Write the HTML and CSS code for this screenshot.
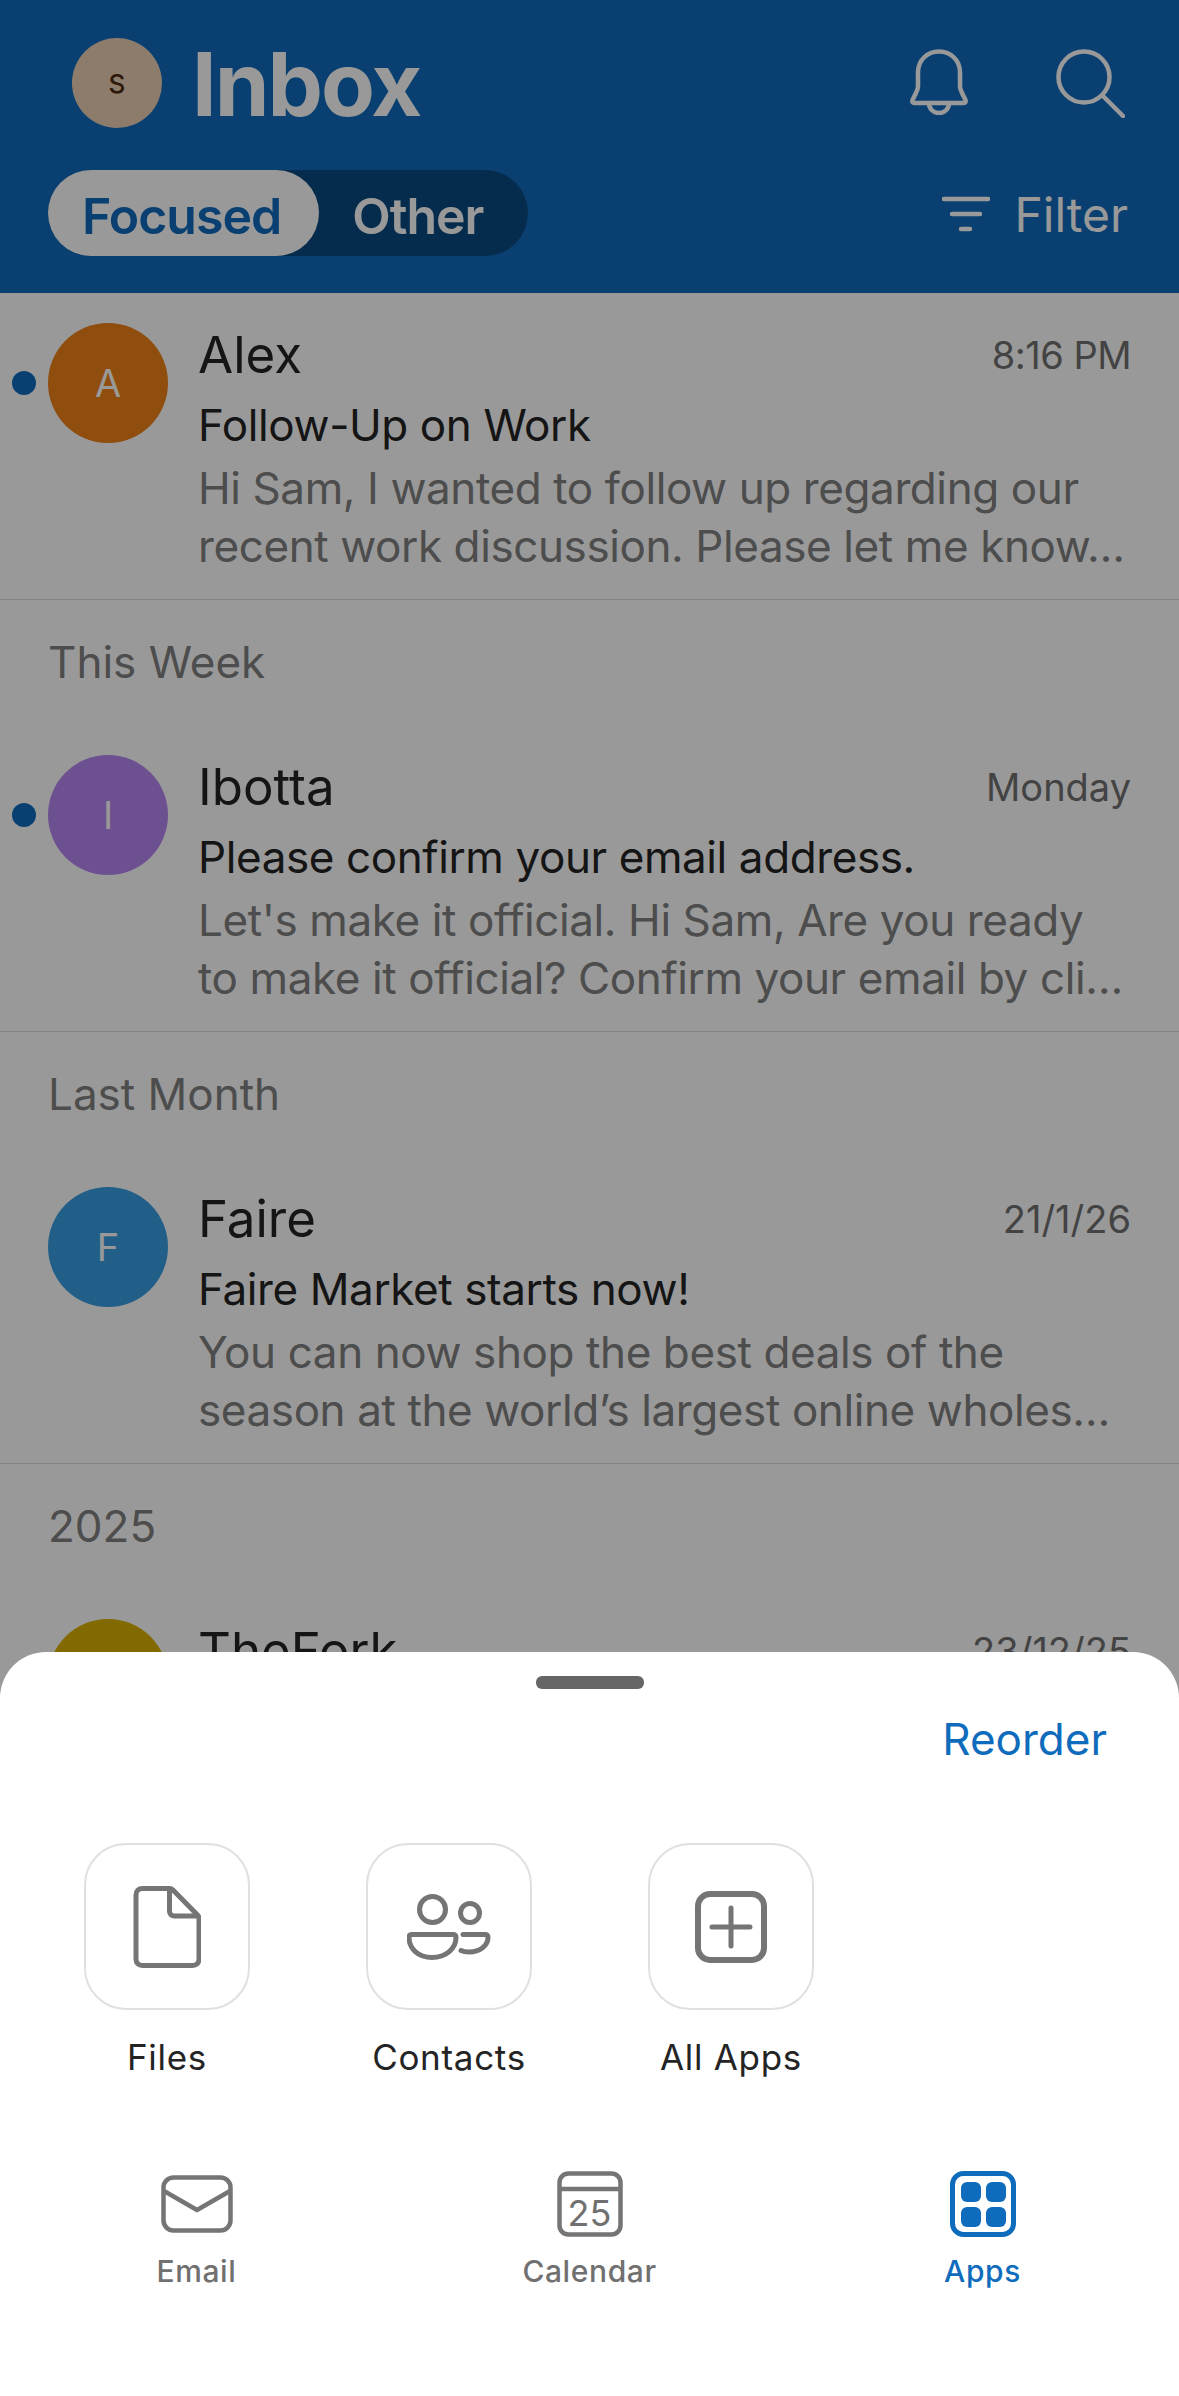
FILE: index.html
```html
<!DOCTYPE html>
<html lang="en">
<head>
    <meta charset="UTF-8">
    <meta name="viewport" content="width=device-width, initial-scale=1.0">
    <title>Inbox</title>
    <link rel="stylesheet" href="styles.css">
</head>
<body>
<div class="app">
    <!-- Blue header -->
    <header class="header">
        <div class="top-row">
            <div class="me">S</div>
            <h1 class="title">Inbox</h1>
            <svg class="icon-bell" width="60" height="66" viewBox="0 0 60 66" fill="none" stroke="currentColor" stroke-width="4.5" stroke-linecap="round" stroke-linejoin="round">
                <path d="M30 2.5c-12 0-21 9-21 21v14c0 3-1.500 5.500-3 8.500l-2.500 5c-.8 1.500 0 3 2 3h49c2 0 2.800-1.500 2-3l-2.500-5c-1.500-3-3-5.500-3-8.500v-14c0-12-9-21-21-21z"/>
                <path d="M20 54c0 6 4.500 10 10 10s10-4 10-10"/>
            </svg>
            <svg class="icon-search" width="69" height="69" viewBox="0 0 69 69" fill="none" stroke="currentColor" stroke-width="4.5" stroke-linecap="round">
                <circle cx="28" cy="28" r="25.500"/>
                <path d="M47 47l20 20"/>
            </svg>
        </div>
        <div class="tab-row">
            <div class="tabs">
                <div class="tab tab-on">Focused</div>
                <div class="tab">Other</div>
            </div>
            <div class="filter">
                <svg width="48" height="36" viewBox="0 0 48 36" fill="none" stroke="currentColor" stroke-width="4.500" stroke-linecap="round">
                    <path d="M2 3h44M10 18h28M19 33h9"/>
                </svg>
                <span>Filter</span>
            </div>
        </div>
    </header>

    <!-- Message list -->
    <main class="list">
        <div class="row">
            <span class="dot"></span>
            <div class="avatar av-orange">A</div>
            <div class="body">
                <div class="line-top"><span class="name">Alex</span><span class="time time-tight">8:16 PM</span></div>
                <div class="subject">Follow-Up on Work</div>
                <div class="preview">Hi Sam, I wanted to follow up regarding our<br>recent work discussion. Please let me know…</div>
            </div>
        </div>
        <div class="section">This Week</div>
        <div class="row">
            <span class="dot"></span>
            <div class="avatar av-purple">I</div>
            <div class="body">
                <div class="line-top"><span class="name">Ibotta</span><span class="time">Monday</span></div>
                <div class="subject">Please confirm your email address.</div>
                <div class="preview">Let's make it official. Hi Sam, Are you ready<br>to make it official? Confirm your email by cli…</div>
            </div>
        </div>
        <div class="section">Last Month</div>
        <div class="row">
            <div class="avatar av-blue">F</div>
            <div class="body">
                <div class="line-top"><span class="name">Faire</span><span class="time">21/1/26</span></div>
                <div class="subject">Faire Market starts now!</div>
                <div class="preview">You can now shop the best deals of the<br>season at the world’s largest online wholes…</div>
            </div>
        </div>
        <div class="section">2025</div>
        <div class="row">
            <div class="avatar av-yellow">T</div>
            <div class="body">
                <div class="line-top"><span class="name">TheFork</span><span class="time">23/12/25</span></div>
            </div>
        </div>
    </main>

    <div class="scrim"></div>

    <!-- Apps sheet -->
    <section class="sheet">
        <div class="handle"></div>
        <div class="reorder">Reorder</div>
        <div class="tiles">
            <div class="tile">
                <div class="tile-box">
                    <svg width="68" height="82" viewBox="0 0 68 82" fill="none" stroke="#757575" stroke-width="5" stroke-linejoin="round">
                        <path d="M9 2.500h27.500c1.500 0 2.500.5 3.500 1.500l24.500 25c1 1 1.500 2 1.500 3.500v40.500c0 4-2.500 6.500-6.500 6.500h-50c-4 0-6.500-2.500-6.500-6.500v-64c0-4 2.500-6.500 6.500-6.500z"/>
                        <path d="M36.500 3v22c0 3 2 5 5 5h24.500"/>
                    </svg>
                </div>
                <div class="tile-label">Files</div>
            </div>
            <div class="tile">
                <div class="tile-box">
                    <svg width="84" height="66" viewBox="0 0 84 66" fill="none" stroke="#757575" stroke-width="5" stroke-linecap="round" stroke-linejoin="round">
                        <circle cx="25.500" cy="15.500" r="13"/>
                        <circle cx="63" cy="19" r="9.500"/>
                        <path d="M5 40.500h41c2 0 3 1 3 3 0 11-10 20-24 20s-23-9-23-20c0-2 1-3 3-3z"/>
                        <path d="M56 40.500h22c2 0 3 1 3 3 0 8-8 14.500-19 14.500-3 0-6-.5-8-1.500"/>
                    </svg>
                </div>
                <div class="tile-label">Contacts</div>
            </div>
            <div class="tile">
                <div class="tile-box">
                    <svg width="72" height="72" viewBox="0 0 72 72" fill="none" stroke="#757575" stroke-linecap="round">
                        <rect x="3" y="3" width="66" height="66" rx="12" stroke-width="6"/>
                        <path d="M36 17v38M17 36h38" stroke-width="5"/>
                    </svg>
                </div>
                <div class="tile-label">All Apps</div>
            </div>
        </div>
        <nav class="nav">
            <div class="nav-item">
                <div class="nav-icon">
                    <svg width="72" height="58" viewBox="0 0 72 58" fill="none" stroke="#757575" stroke-width="4.500" stroke-linejoin="round">
                        <rect x="2.500" y="2.500" width="67" height="53" rx="10"/>
                        <path d="M3 16l33 19 33-19"/>
                    </svg>
                </div>
                <span>Email</span>
            </div>
            <div class="nav-item">
                <div class="nav-icon">
                    <svg width="66" height="66" viewBox="0 0 66 66" fill="none" stroke="#757575" stroke-width="4.500">
                        <rect x="2.500" y="2.500" width="61" height="61" rx="9"/>
                        <path d="M3 18h60"/>
                    </svg>
                    <span class="cal-day">25</span>
                </div>
                <span>Calendar</span>
            </div>
            <div class="nav-item nav-on">
                <div class="nav-icon">
                    <svg width="66" height="66" viewBox="0 0 66 66" fill="#0f6cbd">
                        <rect x="2.500" y="2.500" width="61" height="61" rx="11" fill="none" stroke="#0f6cbd" stroke-width="5"/>
                        <rect x="11" y="11" width="20" height="20" rx="6"/>
                        <rect x="36" y="11" width="20" height="20" rx="6"/>
                        <rect x="11" y="36" width="20" height="20" rx="6"/>
                        <rect x="36" y="36" width="20" height="20" rx="6"/>
                    </svg>
                </div>
                <span>Apps</span>
            </div>
        </nav>
    </section>
</div>
</body>
</html>
```

FILE: styles.css
```css
* {
    box-sizing: border-box;
}

body {
    margin: 0;
    font-family: 'Inter', 'Liberation Sans', sans-serif;
    background: #fff;
}

.app {
    position: relative;
    width: 1179px;
    height: 2396px;
    overflow: hidden;
    background: #fff;
}

/* Header */
.header {
    height: 293px;
    padding: 38px 54px 0 48px;
    background: #0f6cbd;
    color: #fff;
}

.top-row {
    display: flex;
    align-items: center;
    height: 90px;
    padding-left: 24px;
}

.me {
    width: 90px;
    height: 90px;
    border-radius: 50%;
    background: #ecceb4;
    color: #4a2a10;
    font-size: 26px;
    font-weight: 500;
    display: flex;
    justify-content: center;
    align-items: center;
}

.title {
    margin: 2px 0 0 30px;
    font-size: 88px;
    font-weight: 700;
    letter-spacing: -2px;
    line-height: 90px;
    flex: 1;
}

.icon-bell {
    margin-top: -2px;
}

.icon-search {
    margin: 1px 0 0 87px;
}

.tab-row {
    display: flex;
    justify-content: space-between;
    align-items: center;
    margin-top: 42px;
}

.tabs {
    display: flex;
    width: 480px;
    height: 86px;
    border-radius: 43px;
    background: #0a4a80;
}

.tab {
    height: 86px;
    padding: 3px 38px 0 34px;
    border-radius: 43px;
    font-size: 50px;
    font-weight: 600;
    letter-spacing: -1px;
    line-height: 86px;
}

.tab-on {
    background: #fff;
    color: #0f6cbd;
}

.tab + .tab {
    padding-left: 33px;
}

.filter {
    display: flex;
    align-items: center;
    gap: 24px;
    margin: 2px -3px 0 0;
    font-size: 48px;
}

/* List */
.row {
    position: relative;
    display: flex;
    gap: 30px;
    height: 307px;
    padding: 30px 48px 0 48px;
    border-bottom: 1.500px solid #d8d8d8;
}

.dot {
    position: absolute;
    left: 12px;
    top: 78px;
    width: 24px;
    height: 24px;
    border-radius: 50%;
    background: #0f6cbd;
}

.avatar {
    width: 120px;
    height: 120px;
    flex-shrink: 0;
    border-radius: 50%;
    color: #fff;
    font-size: 38px;
    display: flex;
    justify-content: center;
    align-items: center;
}

.av-orange { background: #ee8018; }
.av-purple { background: #b685ee; }
.av-blue { background: #389fe4; }
.av-yellow { background: #d9b000; }

.body {
    flex: 1;
    min-width: 0;
}

.line-top {
    display: flex;
    justify-content: space-between;
    align-items: center;
    height: 64px;
}

.name {
    font-size: 51px;
    line-height: 64px;
    color: #242424;
}

.time {
    font-size: 38px;
    color: #707070;
}

.time-tight {
    letter-spacing: -0.500px;
}

.subject {
    margin-top: 7px;
    font-size: 44px;
    line-height: 62px;
    letter-spacing: -0.400px;
    color: #242424;
}

.preview {
    margin-top: 3px;
    font-size: 44px;
    line-height: 58px;
    letter-spacing: -0.400px;
    white-space: nowrap;
    color: #808080;
}

.section {
    height: 125px;
    padding: 32px 0 0 48px;
    font-size: 44px;
    line-height: 60px;
    color: #808080;
}

.scrim {
    position: absolute;
    inset: 0;
    background: rgba(0, 0, 0, 0.4);
}

/* Bottom sheet */
.sheet {
    position: absolute;
    left: 0;
    right: 0;
    bottom: 0;
    height: 744px;
    padding-top: 24px;
    background: #fff;
    border-radius: 46px 46px 0 0;
}

.handle {
    width: 108px;
    height: 13px;
    margin: 0 auto;
    border-radius: 6px;
    background: #666;
}

.reorder {
    margin-top: 20px;
    padding-right: 72px;
    text-align: right;
    font-size: 44px;
    line-height: 60px;
    color: #0f6cbd;
}

.tiles {
    display: flex;
    gap: 116px;
    margin-top: 74px;
    padding-left: 84px;
}

.tile {
    width: 166px;
    display: flex;
    flex-direction: column;
    align-items: center;
}

.tile-box {
    width: 166px;
    height: 167px;
    border: 2.500px solid #e0e0e0;
    border-radius: 42px;
    display: flex;
    justify-content: center;
    align-items: center;
}

.tile-label {
    margin-top: 22px;
    font-size: 35px;
    line-height: 50px;
    letter-spacing: 0.700px;
    white-space: nowrap;
    color: #242424;
}

.nav {
    display: flex;
    margin-top: 89px;
}

.nav-item {
    width: 393px;
    display: flex;
    flex-direction: column;
    align-items: center;
    font-size: 30px;
    font-weight: 500;
    letter-spacing: 0.600px;
    line-height: 40px;
    color: #707070;
}

.nav-on {
    color: #0f6cbd;
}

.nav-icon {
    position: relative;
    height: 66px;
    margin-bottom: 14px;
    display: flex;
    align-items: center;
}

.cal-day {
    position: absolute;
    left: 0;
    right: 0;
    top: 22px;
    text-align: center;
    font-size: 36px;
    line-height: 40px;
    font-weight: 400;
    letter-spacing: 0;
}
```
